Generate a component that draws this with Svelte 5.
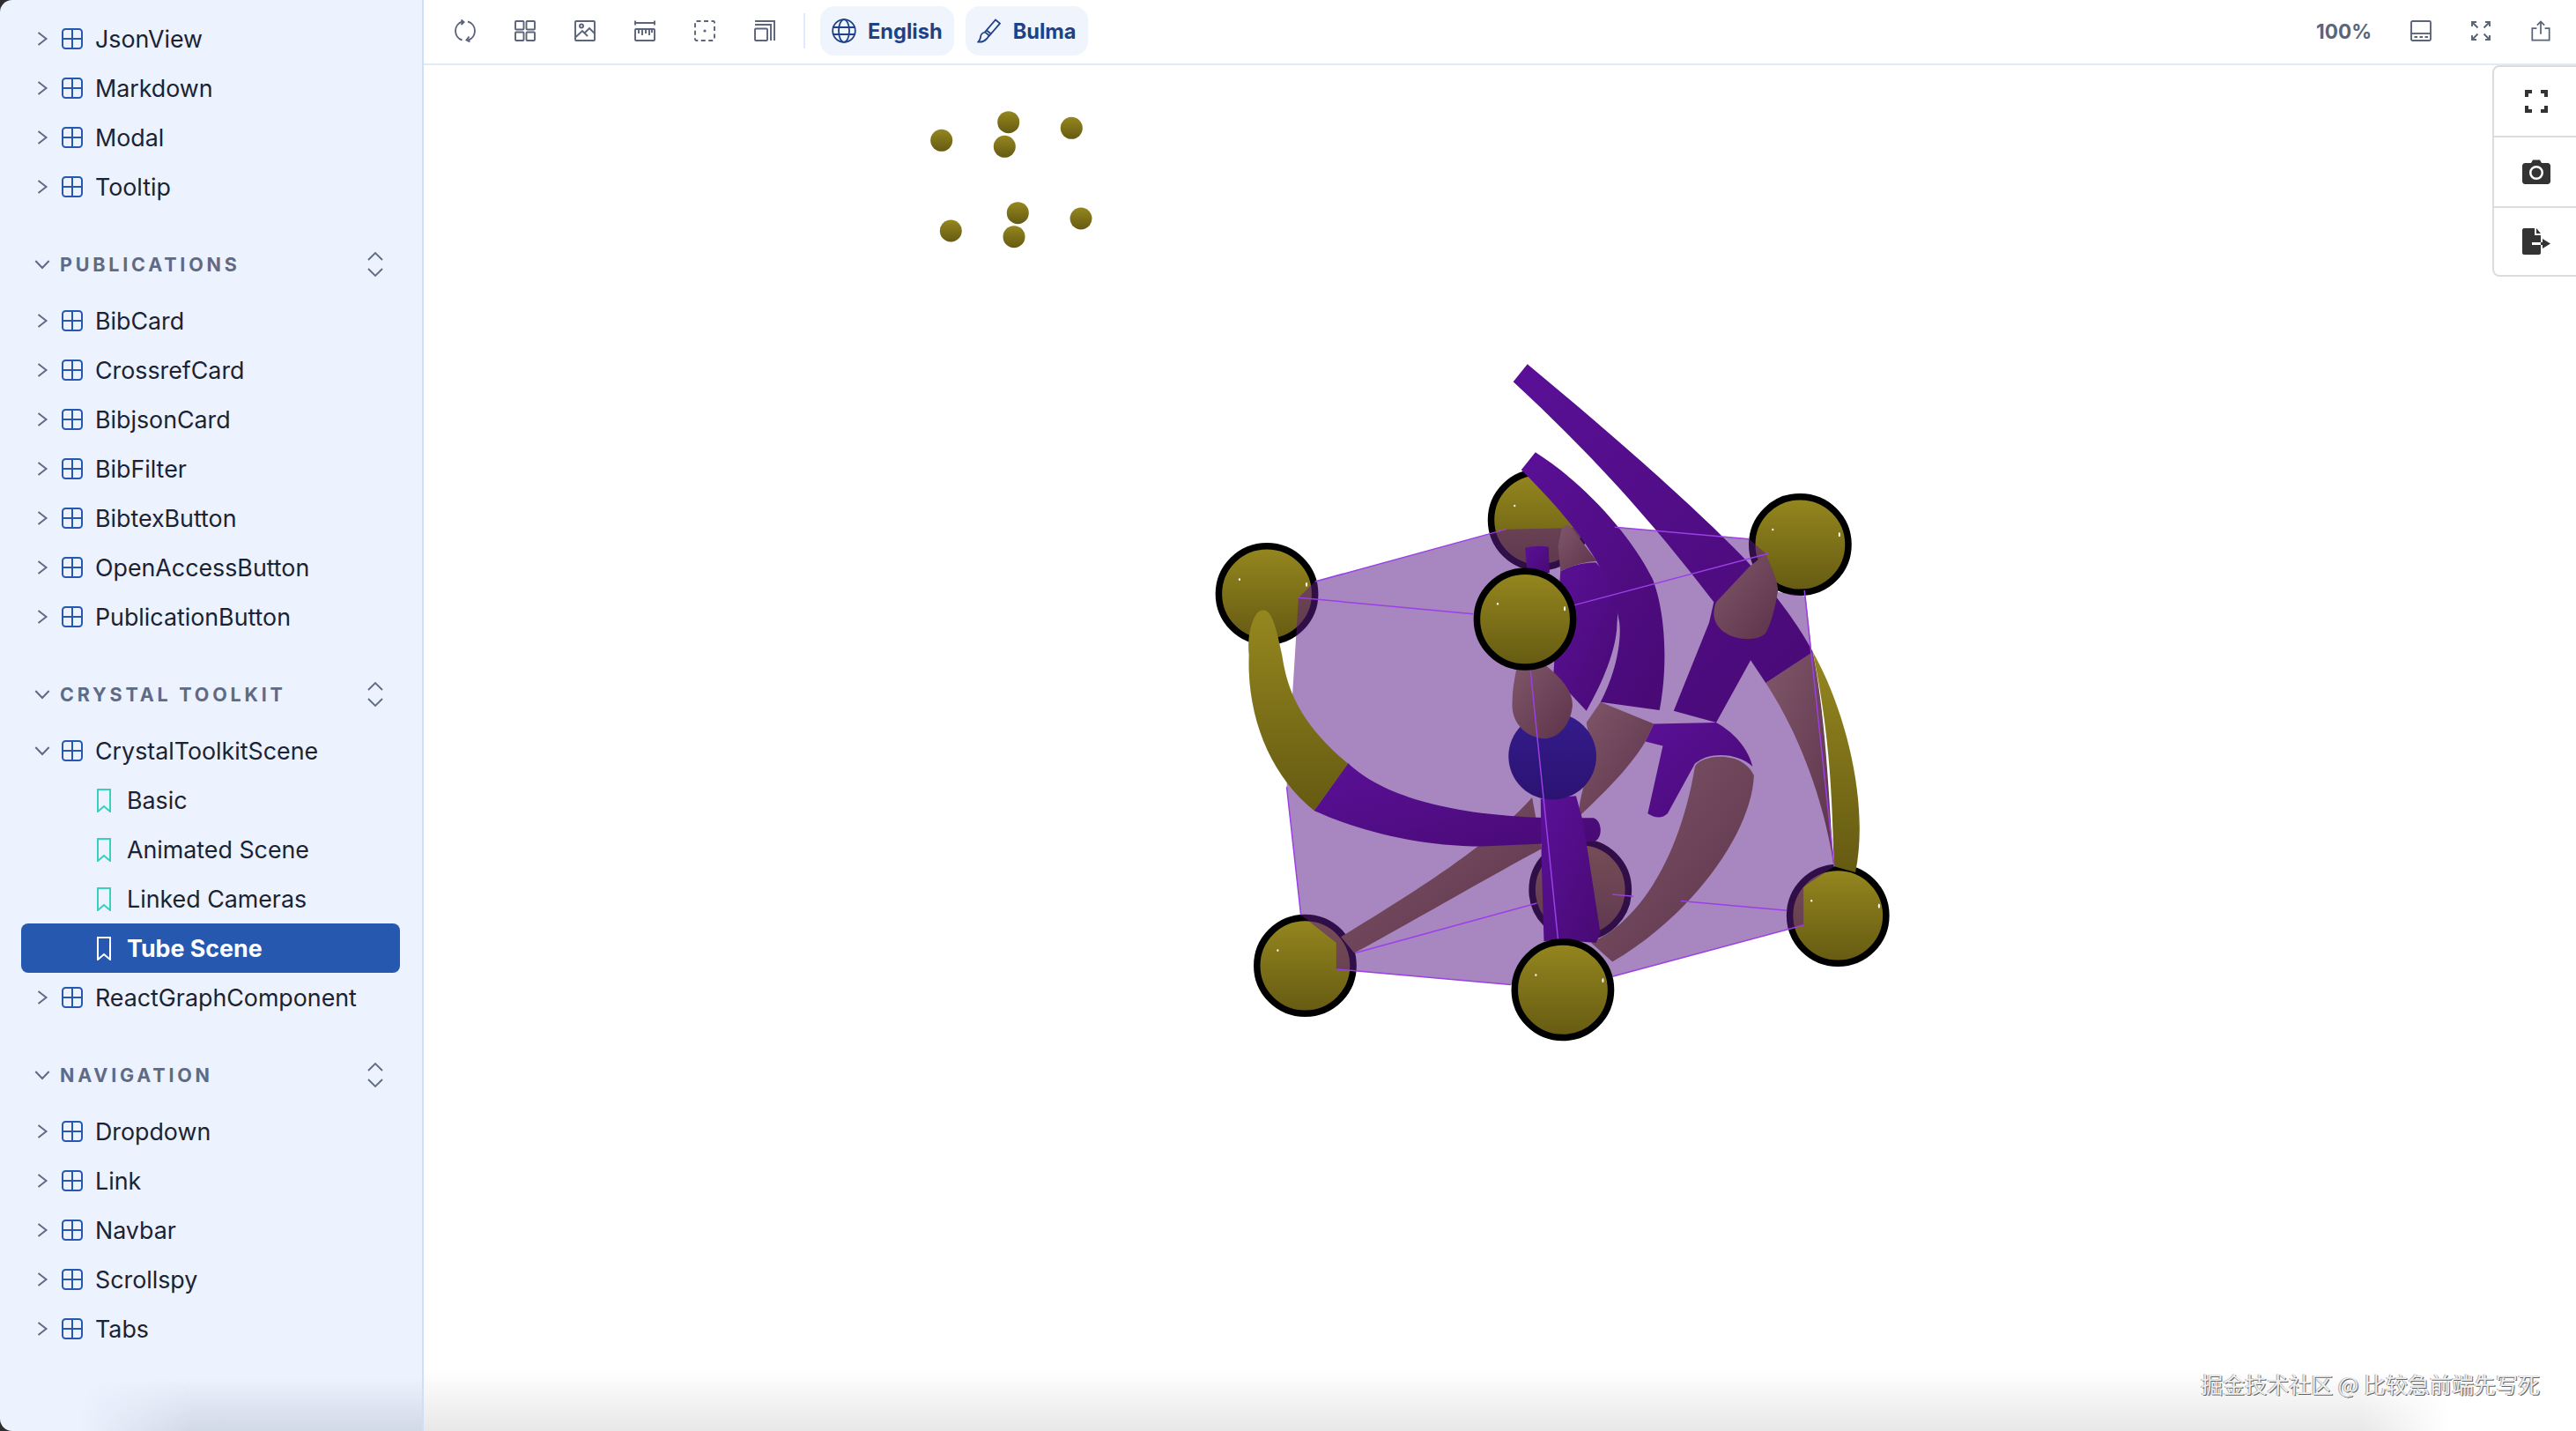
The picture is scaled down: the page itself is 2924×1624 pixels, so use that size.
<script lang="ts">
  type Item = { name: string; open?: boolean; stories?: { name: string; active?: boolean }[] };
  type Section = { title?: string; items: Item[] };

  const sections: Section[] = [
    { items: [{ name: 'JsonView' }, { name: 'Markdown' }, { name: 'Modal' }, { name: 'Tooltip' }] },
    {
      title: 'PUBLICATIONS',
      items: [
        { name: 'BibCard' },
        { name: 'CrossrefCard' },
        { name: 'BibjsonCard' },
        { name: 'BibFilter' },
        { name: 'BibtexButton' },
        { name: 'OpenAccessButton' },
        { name: 'PublicationButton' }
      ]
    },
    {
      title: 'CRYSTAL TOOLKIT',
      items: [
        {
          name: 'CrystalToolkitScene',
          open: true,
          stories: [
            { name: 'Basic' },
            { name: 'Animated Scene' },
            { name: 'Linked Cameras' },
            { name: 'Tube Scene', active: true }
          ]
        },
        { name: 'ReactGraphComponent' }
      ]
    },
    {
      title: 'NAVIGATION',
      items: [{ name: 'Dropdown' }, { name: 'Link' }, { name: 'Navbar' }, { name: 'Scrollspy' }, { name: 'Tabs' }]
    }
  ];

  // small spheres in page coordinates
  const dots = [
    [1068.7, 159.3],
    [1144.7, 138.7],
    [1140.3, 166.3],
    [1216.3, 145.3],
    [1079.3, 262],
    [1155.3, 241.7],
    [1151, 268.7],
    [1227, 248]
  ];

  // big spheres in the scaled scene coordinates
  const backSpheres = [
    [760, 600],
    [183, 852],
    [1313, 684],
    [847, 1860],
    [264, 2118],
    [1393, 1947]
  ];
  const frontSpheres = [
    [730, 938],
    [810, 2200]
  ];
</script>

{#snippet chevron(open: boolean)}
  <svg class="chevron" viewBox="0 0 20 20" aria-hidden="true">
    {#if open}
      <path d="M1.500 5.500l8.500 9 8.500-9" />
    {:else}
      <path d="M5 2.200l10 7.800-10 7.800" />
    {/if}
  </svg>
{/snippet}

<div class="shell">
  <aside class="sidebar">
    {#each sections as section}
      <section class="group">
        {#if section.title}
          <div class="group-head">
            {@render chevron(true)}
            <span class="group-title">{section.title}</span>
            <svg class="updown" viewBox="0 0 20 30" aria-hidden="true">
              <path d="M2 10l8-8 8 8M2 20l8 8 8-8" />
            </svg>
          </div>
        {/if}
        {#each section.items as item}
          <div class="row">
            {@render chevron(!!item.open)}
            <svg class="comp" viewBox="0 0 24 24" aria-hidden="true">
              <rect x="1" y="1" width="22" height="22" rx="3.500" />
              <path d="M12 1v22M1 12h22" />
            </svg>
            <span>{item.name}</span>
          </div>
          {#each item.stories ?? [] as story}
            <div class="row story" class:active={story.active}>
              <svg class="mark" viewBox="0 0 16 27" aria-hidden="true">
                <path d="M1 1h14v25l-7-6-7 6z" />
              </svg>
              <span>{story.name}</span>
            </div>
          {/each}
        {/each}
      </section>
    {/each}
    <div class="side-shade"></div>
  </aside>

  <main class="main">
    <header class="toolbar">
      <div class="tools">
        <svg class="tool wide" viewBox="0 0 26 26" aria-hidden="true">
          <path d="M10 2.500A11 11 0 0 0 9.500 23.500M8.500 0.500l3 2.500-3 3" />
          <path d="M16 2.500A11 11 0 0 1 16.500 23.500M17.500 19.500l-3 4 4 2" />
        </svg>
        <svg class="tool" viewBox="0 0 24 24" aria-hidden="true">
          <rect x="1" y="1" width="9.500" height="9.500" rx="1" />
          <rect x="13.500" y="1" width="9.500" height="9.500" rx="1" />
          <rect x="1" y="13.500" width="9.500" height="9.500" rx="1" />
          <rect x="13.500" y="13.500" width="9.500" height="9.500" rx="1" />
        </svg>
        <svg class="tool" viewBox="0 0 24 24" aria-hidden="true">
          <rect x="1" y="1" width="22" height="22" rx="1" />
          <circle cx="8" cy="6.500" r="2" />
          <path d="M1.500 19l7.500-7 6 6M12 14l5-5 6 6" />
        </svg>
        <svg class="tool" viewBox="0 0 24 24" aria-hidden="true">
          <path d="M1 0.500v5M23 0.500v5M1 3h22" />
          <rect x="1" y="10" width="22" height="13" rx="1" />
          <path d="M5 10v5M9 10v7M13 10v5M17 10v7M20 10v4" />
        </svg>
        <svg class="tool" viewBox="0 0 24 24" aria-hidden="true">
          <rect x="1" y="1" width="22" height="22" rx="1.500" stroke-dasharray="5 3.500" />
          <circle class="dot" cx="12" cy="12" r="1.600" />
        </svg>
        <svg class="tool" viewBox="0 0 24 24" aria-hidden="true">
          <rect x="1" y="9.500" width="14" height="13.500" rx="1" />
          <path d="M1 5h18v18M1 1h22v22" />
        </svg>
      </div>
      <span class="divider"></span>
      <button class="pill" type="button">
        <svg class="pill-icon" viewBox="0 0 28 28" aria-hidden="true">
          <circle cx="14" cy="14" r="12.800" />
          <ellipse cx="14" cy="14" rx="6" ry="12.800" />
          <path d="M1.500 10h25M1.500 18h25" />
        </svg>
        English
      </button>
      <button class="pill" type="button">
        <svg class="pill-icon" viewBox="0 0 28 28" aria-hidden="true">
          <path d="M21 1.500l5 4-12 14-5-4zM9 15.500c-4 1-5 4-5 6-.5 2-1.500 4-2.500 5 3 .5 7-1 9-3 2-2 3-4 3-4M11 13.500l5 4" />
        </svg>
        Bulma
      </button>
      <div class="spacer"></div>
      <span class="zoom">100%</span>
      <svg class="tool right" viewBox="0 0 24 24" aria-hidden="true">
        <rect x="1" y="1" width="22" height="22" rx="1.500" />
        <path d="M1 15h22" />
        <path d="M4.500 19h3.500M10.500 19h3.500M16.500 19h3.500" />
      </svg>
      <svg class="tool right" viewBox="0 0 24 24" aria-hidden="true">
        <path d="M2 2l6.500 6.500M2 7V2h5M22 2l-6.500 6.500M17 2h5v5M2 22l6.500-6.500M2 17v5h5M22 22l-6.500-6.500M22 17v5h-5" />
      </svg>
      <svg class="tool right" viewBox="0 0 24 26" aria-hidden="true">
        <path d="M7 10H1.500v14.500h21V10H17M12 17V1.500M7.500 6L12 1.500 16.500 6" />
      </svg>
    </header>

    <div class="canvas">
      <svg class="scene" viewBox="481 74 2443 1550" aria-hidden="true">
        <defs>
          <linearGradient id="olive" x1="0" y1="0" x2="0" y2="1">
            <stop offset="0" stop-color="#95871f" />
            <stop offset="1" stop-color="#655a12" />
          </linearGradient>
          <linearGradient id="purple" x1="0" y1="0" x2="1" y2="1">
            <stop offset="0" stop-color="#5a1097" />
            <stop offset="1" stop-color="#480a74" />
          </linearGradient>
          <linearGradient id="brown" x1="0" y1="0" x2="1" y2="1">
            <stop offset="0" stop-color="#80566a" />
            <stop offset="1" stop-color="#5c3349" />
          </linearGradient>
          <linearGradient id="blue" x1="0" y1="0" x2="0" y2="1">
            <stop offset="0" stop-color="#341c8c" />
            <stop offset="1" stop-color="#2b1272" />
          </linearGradient>
        </defs>

        {#each dots as d}
          <circle cx={d[0]} cy={d[1]} r="12.500" fill="url(#olive)" />
        {/each}

        <g transform="translate(1340 390) scale(.5357 .3333)">
          {#each backSpheres as s}
            <ellipse class="ball" cx={s[0]} cy={s[1]} rx="102" ry="163" />
          {/each}

          <!-- translucent cell -->
          <path
            fill="#5a1b88"
            fill-opacity=".53"
            d="M250 865L285 810L690 632L920 625L1205 665L1240 715L1265 845L1325 860L1385 1780L1320 1850L1320 1980L915 2155L700 2183L330 2130L330 2040L255 1945L225 1510z"
          />

          <g fill="url(#brown)">
            <path d="M1240 1155L1340 1050C1370 1300 1375 1600 1385 1790C1370 1600 1320 1350 1240 1155z" />
            <path d="M340 2020C450 1910 650 1720 745 1545L765 1720C660 1810 500 1960 368 2075z" />
            <path d="M870 2040C980 1960 1060 1730 1090 1440C1100 1400 1190 1380 1215 1470C1210 1670 1080 1950 915 2105z" />
            <path d="M860 1290L890 1220L1003 1295L985 1355C950 1450 890 1540 845 1610C840 1530 880 1450 860 1290z" />
          </g>

          <g fill="url(#purple)">
            <!-- long tube and the leg below it -->
            <path d="M705 130L735 70C900 290 1080 540 1200 740C1260 850 1310 960 1340 1050L1240 1155L1208 1078L1135 1290L1045 1250L1120 950L1130 880C1020 650 900 420 705 130z" />
            <!-- second tube -->
            <path d="M722 430L752 370C850 470 950 640 1000 800C1025 900 1035 1080 1015 1248L890 1220C920 1130 935 1020 930 950C915 800 860 650 722 430z" />
            <path d="M805 775Q840 745 880 745C915 800 930 880 925 950C925 1050 885 1180 860 1250L790 1130z" />
            <path d="M730 695Q755 685 780 692L782 780L735 780z" />
            <!-- joint with the short branch -->
            <path d="M1003 1295L1135 1290C1180 1330 1205 1390 1212 1440C1185 1395 1120 1385 1090 1430L1032 1600Q1015 1625 990 1600L1022 1370L985 1355z" />
            <path d="M355 1428C420 1530 560 1610 800 1615L875 1615C895 1625 895 1690 875 1695L640 1712C500 1710 380 1660 283 1590z" />
            <path d="M763 1550L838 1540L850 1610L860 1700L890 2010L880 2040L800 2030L770 2035L765 1770z" />
          </g>

          <g fill="url(#brown)">
            <path d="M808 625Q820 615 825 620L882 740Q840 745 805 775L800 690z" />
            <path d="M1205 760L1240 715C1255 770 1270 830 1265 850C1260 900 1250 960 1240 985C1225 1015 1175 1010 1155 985C1130 960 1125 920 1135 880z" />
          </g>

          <g fill="url(#olive)">
            <path d="M145 1060C140 990 155 905 175 908C195 905 205 985 215 1060C225 1170 250 1290 355 1430L283 1590C190 1470 140 1270 145 1060z" />
            <path d="M1340 1050C1410 1250 1460 1570 1430 1800L1385 1780C1380 1570 1380 1370 1340 1050z" />
          </g>

          <ellipse cx="788" cy="1405" rx="93" ry="148" fill="url(#blue)" />
          <path
            fill="url(#brown)"
            d="M712 1105L770 1090C800 1130 835 1180 830 1240C825 1300 800 1345 770 1345C730 1340 700 1290 703 1220C703 1180 708 1140 712 1105z"
          />

          <g class="lines">
            <path d="M285 810L690 632M920 625L1205 665M250 865L620 920M835 890L1245 715" />
            <path d="M1322 840L1385 1780M225 1510L255 1945M740 1090L800 2030" />
            <path d="M370 2075L755 1905M915 1875L960 1882M1060 1898L1285 1930M1320 1980L915 2155M330 2130L700 2183" />
          </g>

          {#each frontSpheres as s}
            <ellipse class="ball" cx={s[0]} cy={s[1]} rx="102" ry="163" />
          {/each}

          <g fill="#fff">
            <ellipse cx="125" cy="803" rx="2" ry="4" />
            <ellipse cx="267" cy="820" rx="2" ry="8" />
            <ellipse cx="708" cy="552" rx="2" ry="4" />
            <ellipse cx="1255" cy="633" rx="2" ry="4" />
            <ellipse cx="1396" cy="650" rx="2" ry="8" />
            <ellipse cx="672" cy="886" rx="2" ry="4" />
            <ellipse cx="814" cy="902" rx="2" ry="8" />
            <ellipse cx="206" cy="2066" rx="2" ry="4" />
            <ellipse cx="753" cy="2150" rx="2" ry="4" />
            <ellipse cx="895" cy="2168" rx="2" ry="8" />
            <ellipse cx="1337" cy="1897" rx="2" ry="4" />
            <ellipse cx="1480" cy="1915" rx="2" ry="8" />
          </g>
        </g>
      </svg>

      <div class="float-panel">
        <div class="float-cell">
          <svg class="fs" viewBox="0 0 28 28" aria-hidden="true">
            <path d="M1 9V1h8v4H5v4zM19 1h8v8h-4V5h-4zM1 19h4v4h4v4H1zM23 19h4v8h-8v-4h4z" />
          </svg>
        </div>
        <div class="float-cell">
          <svg viewBox="0 0 32 28" aria-hidden="true">
            <path
              fill-rule="evenodd"
              d="M3 4h7l2-3.500h8l2 3.500h7c1.500 0 3 1.500 3 3v18c0 1.500-1.500 3-3 3H3c-1.500 0-3-1.500-3-3V7c0-1.500 1.500-3 3-3zM16 7a8 8 0 1 0 0 16a8 8 0 0 0 0-16zm0 2.500a5.500 5.500 0 1 1 0 11a5.500 5.500 0 0 1 0-11z"
            />
          </svg>
        </div>
        <div class="float-cell">
          <svg viewBox="0 0 32 30" aria-hidden="true">
            <path d="M2 0h12v8h7v8H11v3h10v9c0 1-1 2-2 2H2c-1 0-2-1-2-2V2c0-1 1-2 2-2zM16 0l5 6h-5zM23 12l9 5.500-9 5.500v-4h-2v-3h2z" />
          </svg>
        </div>
      </div>

      <div class="main-shade"></div>
      <span class="watermark">掘金技术社区 @ 比较急前端先写死</span>
    </div>
  </main>
</div>

<style>
  :global(body) {
    background: #fff;
  }

  .shell {
    display: flex;
    width: 2924px;
    height: 1624px;
    overflow: hidden;
    background: #2e2e2e;
    font-family: Inter, 'Liberation Sans', sans-serif;
  }

  .sidebar {
    position: relative;
    box-sizing: border-box;
    flex: none;
    width: 481px;
    padding-top: 16px;
    background: #ecf2fe;
    border-right: 2px solid #cfdff8;
    border-radius: 14px 0 0 14px;
    overflow: hidden;
  }

  .group + .group {
    margin-top: 40px;
  }

  .group-head {
    display: flex;
    align-items: center;
    height: 40px;
    margin-bottom: 16px;
    padding: 0 43px 0 39px;
  }

  .group-head .chevron {
    margin-right: 11px;
  }

  .group-title {
    flex: 1;
    font-size: 21.5px;
    font-weight: 700;
    letter-spacing: 3.8px;
    color: #5f6b85;
  }

  .updown {
    width: 20px;
    height: 30px;
    fill: none;
    stroke: #5f6b85;
    stroke-width: 1.8;
  }

  .row {
    display: flex;
    align-items: center;
    height: 56px;
    padding-left: 39px;
    font-size: 26.8px;
    color: #1b2333;
  }

  .chevron {
    flex: none;
    width: 18px;
    height: 18px;
    fill: none;
    stroke: #5f6b85;
    stroke-width: 2.2;
  }

  .comp {
    flex: none;
    width: 24px;
    height: 24px;
    margin: 0 14px 0 13px;
    fill: none;
    stroke: #2558ae;
    stroke-width: 2;
  }

  .story {
    margin: 0 25px 0 24px;
    padding-left: 86px;
    border-radius: 8px;
  }

  .mark {
    flex: none;
    width: 16px;
    height: 27px;
    margin-right: 18px;
    fill: none;
    stroke: #37cfc0;
    stroke-width: 2;
  }

  .story.active {
    background: #2558ae;
    color: #fff;
    font-weight: 700;
  }

  .story.active .mark {
    stroke: #fff;
  }

  .side-shade {
    position: absolute;
    left: 0;
    right: 0;
    bottom: 0;
    height: 60px;
    background: linear-gradient(to bottom, rgba(150, 160, 175, 0), rgba(150, 160, 175, 0.3));
    mask-image: linear-gradient(to right, transparent 90px, #000 220px);
    pointer-events: none;
  }

  .main {
    flex: 1;
    display: flex;
    flex-direction: column;
    min-width: 0;
    background: #fff;
  }

  .toolbar {
    box-sizing: border-box;
    flex: none;
    display: flex;
    align-items: center;
    height: 74px;
    padding: 0 28px 2px 34px;
    border-bottom: 2px solid #e1eafa;
  }

  .tools {
    display: flex;
    align-items: center;
    gap: 44px;
  }

  .tool {
    flex: none;
    width: 24px;
    height: 24px;
    fill: none;
    stroke: #5b6478;
    stroke-width: 1.9;
  }

  .tool.wide {
    width: 26px;
    height: 26px;
    margin-right: -1px;
  }

  .tool .dot {
    fill: #5b6478;
    stroke: none;
  }

  .tool.right {
    margin-left: 44px;
  }

  .divider {
    width: 2px;
    height: 40px;
    margin: 0 17px 0 32px;
    background: #e1eafa;
  }

  .pill {
    display: flex;
    align-items: center;
    gap: 13px;
    height: 56px;
    margin-right: 13px;
    padding: 0 13px;
    border: 0;
    border-radius: 16px;
    background: #f0f4fd;
    color: #1e4289;
    font: 700 23.6px Inter, 'Liberation Sans', sans-serif;
  }

  .pill-icon {
    width: 28px;
    height: 28px;
    fill: none;
    stroke: #1e4289;
    stroke-width: 1.8;
  }

  .spacer {
    flex: 1;
  }

  .zoom {
    font-size: 22.5px;
    font-weight: 700;
    color: #5b6478;
  }

  .canvas {
    position: relative;
    flex: 1;
  }

  .scene {
    position: absolute;
    inset: 0;
    width: 100%;
    height: 100%;
  }

  .ball {
    fill: url(#olive);
    stroke: #000;
    stroke-width: 7.500;
    vector-effect: non-scaling-stroke;
  }

  .lines {
    fill: none;
    stroke: #9b3fe6;
    stroke-width: 1.500;
  }

  .lines path {
    vector-effect: non-scaling-stroke;
  }

  .float-panel {
    position: absolute;
    top: 0;
    right: -12px;
    width: 103px;
    background: #fff;
    border: 2px solid #dcdcdc;
    border-radius: 8px;
  }

  .float-cell {
    display: flex;
    align-items: center;
    justify-content: center;
    box-sizing: border-box;
    height: 80px;
    padding-right: 8px;
  }

  .float-cell:first-child {
    height: 78px;
  }

  .float-cell:last-child {
    height: 78px;
  }

  .float-cell + .float-cell {
    border-top: 2px solid #dcdcdc;
  }

  .float-cell svg {
    width: 32px;
    height: 30px;
    fill: #333;
  }

  .float-cell svg.fs {
    width: 28px;
    height: 28px;
  }

  .main-shade {
    position: absolute;
    left: 0;
    right: 0;
    bottom: 0;
    height: 70px;
    background: linear-gradient(to bottom, rgba(0, 0, 0, 0), rgba(0, 0, 0, 0.09));
    mask-image: linear-gradient(to right, #000 2200px, transparent 2300px);
    pointer-events: none;
  }

  .watermark {
    position: absolute;
    right: 41px;
    bottom: 37px;
    font-family: 'Noto Sans CJK SC', sans-serif;
    font-size: 25px;
    line-height: 34px;
    color: #efefef;
    text-shadow:
      1px 1px 0 #666,
      -1px 0 0 #aaa;
  }
</style>
